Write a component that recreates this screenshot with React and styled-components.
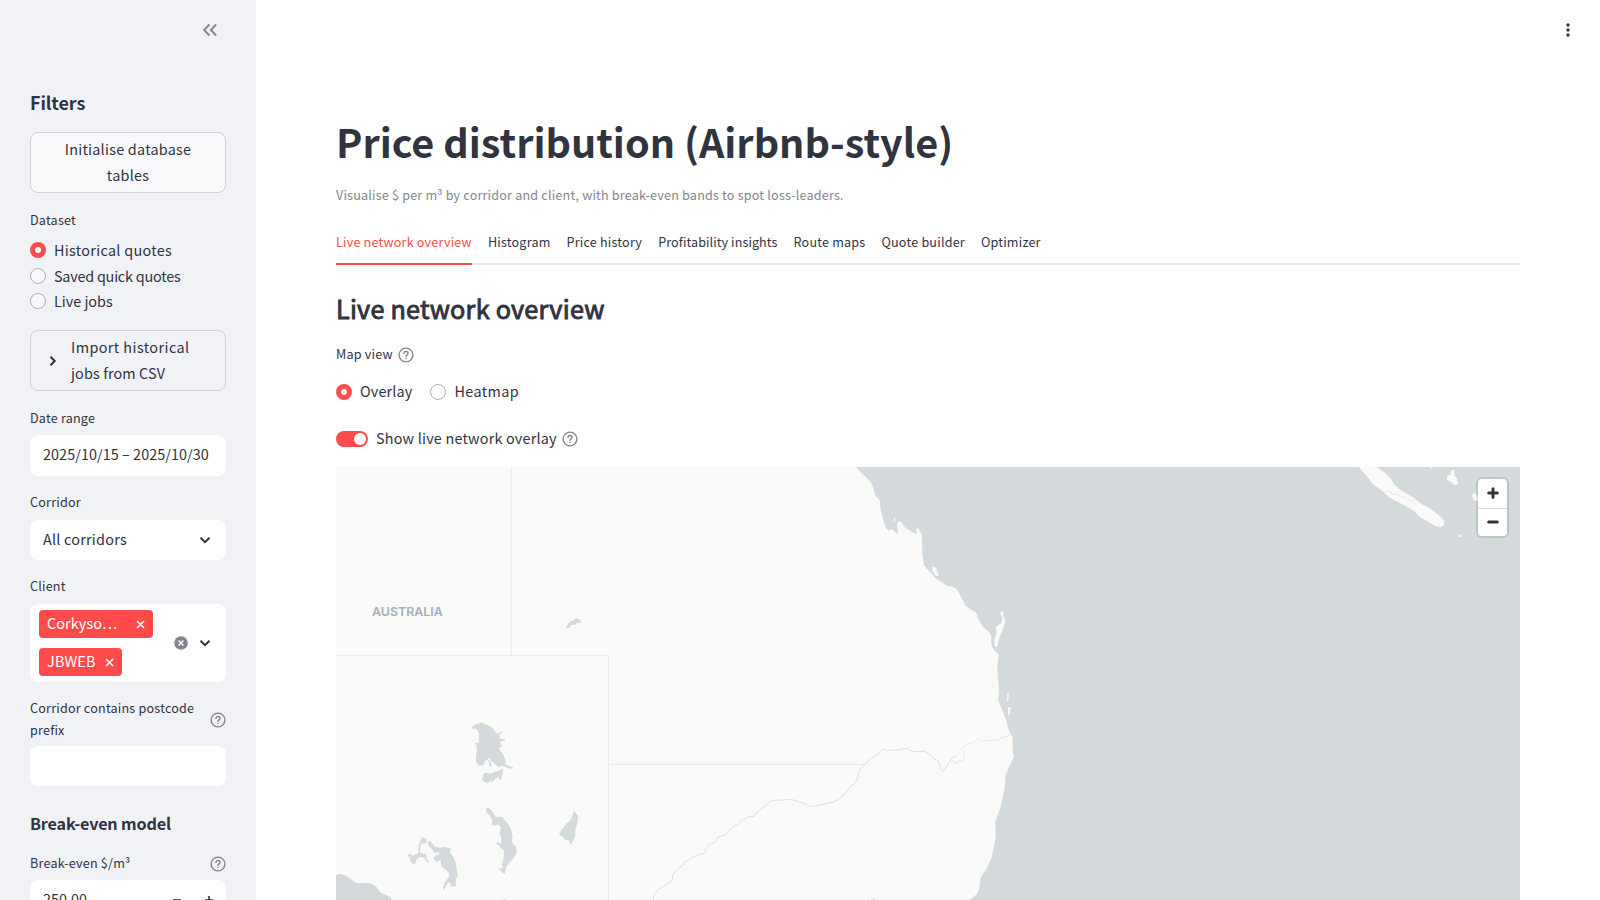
import React from "react";
import styled, { createGlobalStyle, css } from "styled-components";

const ink = "#31333f";
const red = "#ff4b4b";
const muted = "#83858e";

const GlobalStyle = createGlobalStyle`
  * { box-sizing: border-box; }
  html, body { margin: 0; padding: 0; overflow: hidden; }
  body {
    background: #fff;
    color: ${ink};
    font-family: "Source Sans Pro", "Noto Sans CJK SC", "Noto Sans", sans-serif;
    font-size: 14.4px;
    line-height: 25.6px;
    font-kerning: normal;
  }
  svg { display: block; flex: none; }
`;

const Page = styled.div`
  display: flex;
  width: 1600px;
  height: 900px;
  overflow: hidden;
`;

const Sidebar = styled.aside`
  flex: none;
  width: 256px;
  height: 900px;
  padding: 0 30px;
  overflow: hidden;
  background: #f0f2f6;
`;

const SidebarHeader = styled.div`
  display: flex;
  justify-content: flex-end;
  align-items: center;
  height: 60px;
  padding-right: 6px;
  margin-bottom: 30px;
`;

const SidebarTitle = styled.h2`
  margin: 0 0 18px;
  height: 24px;
  font-size: 18px;
  font-weight: 600;
  letter-spacing: -0.1px;
  line-height: 24px;
`;

const SidebarSubtitle = styled.h3`
  margin: 0;
  padding-top: 8px;
  height: 50px;
  font-size: 16.2px;
  font-weight: 600;
  letter-spacing: -0.18px;
  line-height: 27px;
`;

const Button = styled.button`
  display: block;
  width: 100%;
  height: 61.2px;
  margin: 0 0 16px;
  padding: 3px 12px 5px;
  border: 1px solid #d0d2d8;
  border-radius: 8px;
  background: #f9f9fb;
  color: inherit;
  font: inherit;
  letter-spacing: 0.25px;
  text-align: center;
`;

const Text = styled.span`
  padding-bottom: ${(p) => (p.$raise ? 2 : 0)}px;
  letter-spacing: ${(p) => p.$track || 0}px;
`;

const Field = styled.div`
  margin-bottom: ${(p) => p.$after || 16}px;
`;

const Label = styled.div`
  display: flex;
  align-items: center;
  justify-content: ${(p) => (p.$spread ? "space-between" : "flex-start")};
  gap: 5px;
  min-height: 24px;
  margin-bottom: ${(p) => p.$after || 4}px;
`;

const LabelText = styled.span`
  padding-bottom: 2px;
  font-size: 12.6px;
  letter-spacing: 0.2px;
  line-height: 22px;
`;

const RadioGroup = styled.div`
  display: flex;
  flex-direction: ${(p) => (p.$inline ? "row" : "column")};
  gap: ${(p) => (p.$inline ? "18px" : "0")};
`;

const RadioOption = styled.label`
  display: flex;
  align-items: center;
  gap: 8px;
  height: 25.6px;
`;

const RadioDot = styled.span`
  flex: none;
  width: 16px;
  height: 16px;
  border-radius: 50%;
  ${(p) =>
    p.$on
      ? css`border: 5px solid ${red}; background: #fff;`
      : css`border: 1px solid #adafb6; background: ${p.$fill || "#f9f9fb"};`}
`;

const Expander = styled.div`
  display: flex;
  align-items: center;
  gap: 12px;
  height: 61.2px;
  margin-bottom: 16px;
  padding: 4px 14px 4px 16px;
  border: 1px solid #cfd1d7;
  border-radius: 8px;
`;

const ExpanderText = styled.div`
  display: flex;
  flex-direction: column;
  padding-bottom: 2px;
`;

const Control = styled.div`
  display: flex;
  align-items: center;
  justify-content: space-between;
  height: 40px;
  padding: 0 15px 0 13px;
  border-radius: 8px;
  background: #fff;
  white-space: nowrap;
`;

const DateControl = styled(Control)`
  height: 41px;
  padding-bottom: 2px;
`;

const NumberControl = styled(Control)`
  padding-right: 13px;
`;

const MultiSelect = styled(Control)`
  height: 78px;
  padding-left: 9px;
`;

const TagList = styled.div`
  display: flex;
  flex-direction: column;
  align-items: flex-start;
  gap: 10px;
`;

const Tag = styled.span`
  display: flex;
  align-items: center;
  justify-content: space-between;
  width: ${(p) => p.$width}px;
  height: 28px;
  padding: 0 8px;
  border-radius: 4px;
  background: ${red};
  color: #fff;
`;

const IconRow = styled.div`
  display: flex;
  align-items: center;
  gap: ${(p) => p.$gap || 8}px;
`;

const Main = styled.main`
  flex: 1;
  min-width: 0;
  padding: 0 80px;
`;

const Toolbar = styled.header`
  display: flex;
  align-items: center;
  justify-content: flex-end;
  height: 60px;
  margin: 0 -50px 54px 0;
`;

const Title = styled.h1`
  margin: 0;
  height: 53px;
  font-size: 39.6px;
  font-weight: 700;
  line-height: 53px;
`;

const Caption = styled.p`
  margin: 17px 0 16px;
  height: 22px;
  color: #83858e;
  font-size: 12.6px;
  letter-spacing: 0.19px;
  line-height: 22px;
`;

const Tabs = styled.nav`
  display: flex;
  gap: 16px;
  height: 43px;
  border-bottom: 2px solid #e8e9eb;
`;

const Tab = styled.a`
  height: 43px;
  border-bottom: 2px solid ${(p) => (p.$active ? red : "transparent")};
  color: ${(p) => (p.$active ? red : ink)};
  font-size: 12.6px;
  letter-spacing: ${(p) => p.$track}px;
  line-height: 39px;
  white-space: nowrap;
`;

const Heading = styled.h2`
  margin: 27px 0 18px;
  height: 33px;
  font-size: 25.2px;
  font-weight: 400;
  letter-spacing: 0.25px;
  line-height: 33px;
  -webkit-text-stroke: 0.9px ${ink};
`;

const InlineRadios = styled.div`
  margin-top: 12px;
`;

const ToggleRow = styled.div`
  display: flex;
  align-items: center;
  gap: 8px;
  height: 26px;
  margin: 21.4px 0 15px;
`;

const Toggle = styled.span`
  display: flex;
  align-items: center;
  justify-content: flex-end;
  width: 32px;
  height: 16px;
  padding: 2px;
  border-radius: 8px;
  background: ${red};
  &::after {
    content: "";
    width: 12px;
    height: 12px;
    border-radius: 50%;
    background: #fff;
  }
`;

const MapFrame = styled.div`
  position: relative;
  width: 1184px;
  height: 433px;
  overflow: hidden;
  background: #d4dadc;
`;

const MapLabel = styled.span`
  position: absolute;
  left: 36px;
  top: 135px;
  color: #a4b0ba;
  font-family: Inter, sans-serif;
  font-size: 12.4px;
  font-weight: 600;
  line-height: 20px;
`;

const ZoomControls = styled.div`
  position: absolute;
  top: 12px;
  right: 13px;
  width: 29px;
  border-radius: 4px;
  background: #fff;
  box-shadow: 0 0 0 2px rgba(0, 0, 0, 0.1);
`;

const ZoomButton = styled.div`
  display: flex;
  align-items: center;
  justify-content: center;
  height: ${(p) => p.$height || 29}px;
  & + & { border-top: 1px solid #ddd; }
`;

const HelpIcon = () => (
  <svg width="16" height="16" viewBox="0 0 16 16" fill="none" stroke={muted} strokeWidth="1.4" strokeLinecap="round">
    <circle cx="8" cy="8" r="6.9" />
    <path d="M5.900 6.300c.2-1.200 1-1.800 2.100-1.800 1.200 0 2.100.7 2.100 1.800 0 1.500-2.050 1.550-2.050 3.100" />
    <circle cx="8.050" cy="11.600" r=".35" fill={muted} strokeWidth=".8" />
  </svg>
);

const Chevron = ({ right }) => (
  <svg width="12" height="12" viewBox="0 0 12 12" fill="none" stroke={ink} strokeWidth="2">
    <path d={right ? "M3.500 1.700 7.700 6 3.500 10.300" : "M1.500 3.700 6 8.200 10.500 3.700"} />
  </svg>
);

const Cross = () => (
  <svg width="9" height="9" viewBox="0 0 9 9" fill="none" stroke="#fff" strokeWidth="1.600">
    <path d="M1 1l7 7M8 1 1 8" />
  </svg>
);

const ClearIcon = () => (
  <svg width="14" height="14" viewBox="0 0 14 14">
    <circle cx="7" cy="7" r="6.800" fill="#83858e" />
    <path d="M4.600 4.600l4.800 4.800M9.400 4.600 4.600 9.400" stroke="#fff" strokeWidth="1.400" />
  </svg>
);

const CollapseIcon = () => (
  <svg width="20" height="20" viewBox="0 0 20 20" fill="none" stroke={muted} strokeWidth="1.900">
    <path d="M9.400 4.500 4.200 10l5.200 5.500M16.100 4.500 10.900 10l5.200 5.500" />
  </svg>
);

const MenuIcon = () => (
  <svg width="4" height="14" viewBox="0 0 4 14" fill={ink}>
    <circle cx="2" cy="2" r="1.700" />
    <circle cx="2" cy="7" r="1.700" />
    <circle cx="2" cy="12" r="1.700" />
  </svg>
);

const StepIcon = ({ plus }) => (
  <svg width="8" height="8" viewBox="0 0 8 8" stroke={ink} strokeWidth="1.600">
    <path d={plus ? "M0 4h8M4 0v8" : "M0 4h8"} />
  </svg>
);

const ZoomIcon = ({ plus }) => (
  <svg width="12" height="12" viewBox="0 0 12 12" stroke="#333" strokeWidth="3" strokeLinecap="round">
    <path d={plus ? "M1.700 6h8.600M6 1.700v8.600" : "M1.700 6h8.600"} />
  </svg>
);

const land = "#fafaf8";
const water = "#d4dadc";
const border = "#f2e6e7";

/* Drawn at three units to the pixel; each group is one area of the map. */
const Basemap = () => (
  <svg width="1184" height="433" viewBox="0 0 3552 1299" fill="none" strokeWidth="3" strokeLinejoin="round">
    <g transform="translate(1512 -21)" fill={land}>
      <path d="M-1512 21H48L62 37 80 53 96 72 101 88 106 107 119 120 121 145 130 182 138 203 146 212 155 206 162 212 170 221 174 220 171 190 180 182 194 202 212 213 226 223 229 220 229 206 233 204 245 222 247 285 252 316 262 328 276 342 284 353 300 363 320 377 340 380 352 389 365 415 378 437 395 449 410 460 413 474 428 500 446 515 453 525 454 555 462 570 477 583 474 603 472 620 474 650 477 690 475 720 485 748 498 778 504 805 512 822 518 832 518 870 522 892 508 918 497 945 494 985 482 1040 466 1085 467 1130 460 1170 454 1195 442 1222 421 1255 418 1285 410 1303 390 1320H-1512Z" />
      <path d="M162 174L165 172 165 187 162 184ZM276 318L281 322 289 323 291 335 297 347 288 348 277 332ZM480 458L489 453 490 469 497 482 492 497 478 535 471 560 465 560 462 541 470 518 468 502 484 488 487 474Z" />
      <path d="M502 702L506 698 505 724 501 726ZM504 742L512 741 510 759 505 771Z" />
    </g>
    <g transform="translate(3012 -21)">
      <path fill={land} d="M56 21H110L136 39 153 56 162 73 179 88 218 112 244 131 272 146 300 169 313 183 312 196 301 202 286 198 267 187 240 172 224 154 190 134 151 114 126 92 98 71 80 48ZM270 25L273 21 277 22 273 27ZM321 48L332 44 332 32 343 31 344 48 351 57 354 73 344 76 333 65 321 59ZM396 104L406 98 415 112 414 124 401 121ZM357 225L363 223 366 230 359 232Z" />
      <path stroke={border} d="M134 97L146 94 153 96 156 103 172 103 183 110 192 111 201 119 219 124 227 117" />
    </g>
    <g transform="translate(-18 279)">
      <path stroke={border} d="M544 -280V286M18 286H835V1020M835 613H1606" />
      <path fill={water} d="M707 204L714 193 720 184 729 182 738 173 753 181 751 189 741 189 736 194 724 194 717 204Z" />
    </g>
    <g transform="translate(-18 699)" fill={water}>
      <path d="M426 81L437 73 448 71 455 66 461 71 475 76 488 84 498 99 506 101 508 96 517 97 508 104 510 116 525 118 524 124 512 123 511 131 519 139 508 142 509 150 520 164 526 179 527 194 540 199 549 201 547 206 534 205 521 197 513 197 509 202 501 197 493 190 484 184 477 171 474 179 483 185 484 199 477 199 478 187 472 179 465 183 462 192 454 197 445 195 438 185 438 164 441 151 439 134 435 132 436 128 446 129 447 103 443 91 432 83 429 90Z" />
      <path d="M456 239L461 222 467 218 485 221 497 214 506 214 516 205 519 216 513 239 508 239 505 231 495 236 486 247 481 241 475 248 465 247Z" />
      <path d="M468 324L475 323 484 330 491 340 496 350 516 351 532 369 543 388 548 409 546 425 559 443 560 461 551 475 539 487 529 499 524 521 517 519 514 513 504 504 519 506 516 493 521 474 522 451 512 444 508 437 496 430 504 427 514 430 513 409 508 403 513 383 506 374 495 377 485 375 487 362 480 347 470 338Z" />
      <path d="M733 333L738 340 744 347 742 368 736 389 735 411 728 424 725 432 719 431 717 421 705 421 699 411 687 403 697 386 712 368 720 363 727 347Z" />
      <path d="M272 420L275 411 289 416 291 426 284 431 275 429 271 441 270 457 279 461 288 462 291 477 297 487 292 488 284 475 277 472 268 472 260 477 255 493 248 493 241 482 240 472 233 467 239 459 246 467 259 462 266 457 265 442Z" />
      <path d="M294 423L301 424 308 432 313 439 325 443 341 441 362 445 360 458 371 473 378 491 380 513 384 524 377 539 378 558 363 560 361 547 354 548 345 563 343 572 339 564 343 548 357 531 357 518 344 506 333 497 332 480 318 487 311 476 315 467 328 463 325 457 311 458 308 448 295 439Z" />
      <path d="M18 524L31 522 45 526 60 536 80 549 116 549 128 553 140 562 150 576 183 592V600H18ZM521 598H528V601H521Z" />
    </g>
    <g transform="translate(792 699)">
      <path stroke="#dce2e5" d="M160 600V589L174 569 217 541 218 523 238 504 250 495 256 483 265 482 275 473 289 467 312 459 317 455 317 445 325 436 347 424 355 411 376 405 385 397 394 384 404 377 414 375 424 360 438 357 444 350 461 349 468 339 490 322 515 302 573 298 600 306 631 319 643 319 700 306 726 291 742 272 754 258 764 251 769 242 779 212 788 200 796 193" />
      <path stroke="#e3dde0" d="M796 193L802 188 808 178 837 160 846 149 854 146 860 152 890 150 921 145 937 155 972 154 993 165 998 174 1013 182 1019 192 1022 208 1028 212 1037 204 1047 187" />
      <path stroke="#dce2e5" d="M1047 187L1058 172 1073 166" />
      <path stroke={border} d="M1047 187L1061 182 1067 190 1075 184 1087 184 1093 168 1092 157 1083 147 1091 138 1110 130 1127 124 1134 114 1141 120 1157 123 1174 120 1195 122 1201 113 1217 111 1231 103" />
      <path fill={water} d="M813 597L820 598 823 591 826 601H813Z" />
    </g>
  </svg>
);

const Radio = ({ on, fill, track, raise, children }) => (
  <RadioOption>
    <RadioDot $on={on} $fill={fill} />
    <Text $track={track} $raise={raise}>{children}</Text>
  </RadioOption>
);

const tabs = [
  { name: "Live network overview", track: 0.2 },
  { name: "Histogram", track: 0.2 },
  { name: "Price history", track: 0.2 },
  { name: "Profitability insights", track: 0.08 },
  { name: "Route maps", track: 0.2 },
  { name: "Quote builder", track: 0.2 },
  { name: "Optimizer", track: 0.2 },
];

export default function App() {
  return (
    <Page>
      <GlobalStyle />
      <Sidebar>
        <SidebarHeader><CollapseIcon /></SidebarHeader>
        <SidebarTitle>Filters</SidebarTitle>
        <Button>Initialise database tables</Button>
        <Field>
          <Label><LabelText>Dataset</LabelText></Label>
          <RadioGroup>
            <Radio on track={0.3}>Historical quotes</Radio>
            <Radio track={-0.22}>Saved quick quotes</Radio>
            <Radio>Live jobs</Radio>
          </RadioGroup>
        </Field>
        <Expander>
          <Chevron right />
          <ExpanderText>
            <Text $track={0.42}>Import historical</Text>
            <Text $track={0.12}>jobs from CSV</Text>
          </ExpanderText>
        </Expander>
        <Field $after={15}>
          <Label><LabelText>Date range</LabelText></Label>
          <DateControl><Text $track={0.06} $raise>2025/10/15 – 2025/10/30</Text></DateControl>
        </Field>
        <Field $after={15}>
          <Label $after={5}><LabelText>Corridor</LabelText></Label>
          <Control><Text $track={0.23} $raise>All corridors</Text><Chevron /></Control>
        </Field>
        <Field $after={14.6}>
          <Label $after={5}><LabelText>Client</LabelText></Label>
          <MultiSelect>
            <TagList>
              <Tag $width={114}><Text $track={0.1} $raise>Corkyso…</Text><Cross /></Tag>
              <Tag $width={83}><Text $track={0.2} $raise>JBWEB</Text><Cross /></Tag>
            </TagList>
            <IconRow $gap={11}><ClearIcon /><Chevron /></IconRow>
          </MultiSelect>
        </Field>
        <Field>
          <Label $spread $after={3}><LabelText>Corridor contains postcode prefix</LabelText><HelpIcon /></Label>
          <Control />
        </Field>
        <SidebarSubtitle>Break-even model</SidebarSubtitle>
        <Field>
          <Label $spread><LabelText>Break-even $/m³</LabelText><HelpIcon /></Label>
          <NumberControl><Text $raise>250.00</Text><IconRow $gap={24}><StepIcon /><StepIcon plus /></IconRow></NumberControl>
        </Field>
      </Sidebar>
      <Main>
        <Toolbar><MenuIcon /></Toolbar>
        <Title>Price distribution (Airbnb-style)</Title>
        <Caption>Visualise $ per m³ by corridor and client, with break-even bands to spot loss-leaders.</Caption>
        <Tabs>
          {tabs.map((tab, i) => <Tab key={tab.name} $active={i === 0} $track={tab.track}>{tab.name}</Tab>)}
        </Tabs>
        <Heading>Live network overview</Heading>
        <Label><LabelText>Map view</LabelText><HelpIcon /></Label>
        <InlineRadios>
          <RadioGroup $inline>
            <Radio on raise track={0.15}>Overlay</Radio>
            <Radio fill="#fff" raise track={0.38}>Heatmap</Radio>
          </RadioGroup>
        </InlineRadios>
        <ToggleRow>
          <Toggle />
          <IconRow $gap={5}><Text $raise $track={0.2}>Show live network overlay</Text><HelpIcon /></IconRow>
        </ToggleRow>
        <MapFrame>
          <Basemap />
          <MapLabel>AUSTRALIA</MapLabel>
          <ZoomControls>
            <ZoomButton><ZoomIcon plus /></ZoomButton>
            <ZoomButton $height={28}><ZoomIcon /></ZoomButton>
          </ZoomControls>
        </MapFrame>
      </Main>
    </Page>
  );
}
